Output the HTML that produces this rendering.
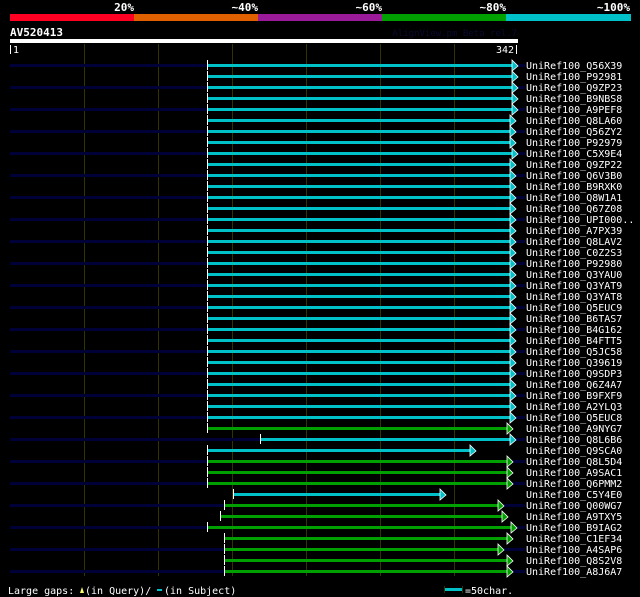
<!DOCTYPE html>
<html><head><meta charset="utf-8"><style>
html,body{margin:0;padding:0;background:#000;width:640px;height:597px;overflow:hidden}
svg{display:block}
text{font-family:"DejaVu Sans Mono","Liberation Mono",monospace;fill:#fff}
</style></head><body>
<svg id="s" width="640" height="597" xmlns="http://www.w3.org/2000/svg">
<rect x="10" y="14" width="124" height="7" fill="#ff0022"/>
<rect x="134" y="14" width="124" height="7" fill="#e06000"/>
<rect x="258" y="14" width="124" height="7" fill="#9a1a9a"/>
<rect x="382" y="14" width="124" height="7" fill="#00a000"/>
<rect x="506" y="14" width="125" height="7" fill="#00c0c8"/>
<text x="134" y="11" font-size="11" font-weight="bold" text-anchor="end">20%</text>
<text x="258" y="11" font-size="11" font-weight="bold" text-anchor="end">~40%</text>
<text x="382" y="11" font-size="11" font-weight="bold" text-anchor="end">~60%</text>
<text x="506" y="11" font-size="11" font-weight="bold" text-anchor="end">~80%</text>
<text x="630" y="11" font-size="11" font-weight="bold" text-anchor="end">~100%</text>
<text x="10" y="36" font-size="11" font-weight="bold">AV520413</text>
<text x="517" y="36" font-size="9" text-anchor="end" style="fill:#0a0a30">AlignView.pm Beta rel.7</text>
<rect x="10" y="39" width="508" height="4" fill="#fff"/>
<rect x="10" y="45" width="1" height="9" fill="#fff"/>
<text x="13" y="53" font-size="10">1</text>
<text x="514" y="53" font-size="10" text-anchor="end">342</text>
<rect x="516" y="45" width="1" height="9" fill="#fff"/>
<g id="grid"></g>
<g id="rows"></g>
<text x="8" y="594" font-size="10">Large gaps:</text>
<polygon points="80,593 82,587 84,593" fill="#ffff66"/>
<text x="85" y="594" font-size="10">(in Query)/</text>
<rect x="157" y="589" width="5" height="2" fill="#00c0c8"/>
<text x="164" y="594" font-size="10">(in Subject)</text>
<rect x="445" y="588" width="17" height="3" fill="#00c0c8"/>
<rect x="444" y="586" width="1" height="7" fill="#333300"/>
<rect x="462" y="586" width="1" height="7" fill="#333300"/>
<text x="465" y="594" font-size="10">=50char.</text>
</svg>
<script>
var NS="http://www.w3.org/2000/svg";
function el(p,t,a){var e=document.createElementNS(NS,t);for(var k in a)e.setAttribute(k,a[k]);p.appendChild(e);return e;}
var g=document.getElementById('grid');
[84,158,232,306,380,454].forEach(function(x){el(g,'rect',{x:x,y:44,width:1,height:532,fill:'#333300'});});
var C='#00c0c8',G='#00a000';
var rows=[
["Q56X39",207,512,C],["P92981",207,512,C],["Q9ZP23",207,512,C],["B9NBS8",207,512,C],["A9PEF8",207,512,C],
["Q8LA60",207,510,C],["Q56ZY2",207,510,C],["P92979",207,510,C],["C5X9E4",207,512,C],["Q9ZP22",207,510,C],
["Q6V3B0",207,510,C],["B9RXK0",207,510,C],["Q8W1A1",207,510,C],["Q67Z08",207,510,C],["UPI000..",207,510,C],
["A7PX39",207,510,C],["Q8LAV2",207,510,C],["C0Z2S3",207,510,C],["P92980",207,510,C],["Q3YAU0",207,510,C],
["Q3YAT9",207,510,C],["Q3YAT8",207,510,C],["Q5EUC9",207,510,C],["B6TAS7",207,510,C],["B4G162",207,510,C],
["B4FTT5",207,510,C],["Q5JC58",207,510,C],["Q39619",207,510,C],["Q9SDP3",207,510,C],["Q6Z4A7",207,510,C],
["B9FXF9",207,510,C],["A2YLQ3",207,510,C],["Q5EUC8",207,510,C],["A9NYG7",207,507,G],["Q8L6B6",260,510,C],
["Q9SCA0",207,470,C],["Q8L5D4",207,507,G],["A9SAC1",207,507,G],["Q6PMM2",207,507,G],["C5Y4E0",233,440,C],
["Q00WG7",224,498,G],["A9TXY5",220,502,G],["B9IAG2",207,511,G],["C1EF34",224,507,G],["A4SAP6",224,498,G],
["Q8S2V8",224,507,G],["A8J6A7",224,507,G]];
var r=document.getElementById('rows');
rows.forEach(function(d,i){
 var y=65+11*i;
 if(i%2==0){el(r,'rect',{x:10,y:y-1,width:d[1]-10,height:3,fill:'#000038'});el(r,'rect',{x:d[2]+6,y:y-1,width:519-d[2],height:3,fill:'#000038'});}
 el(r,'rect',{x:d[1],y:y-1,width:d[2]-d[1],height:3,fill:d[3]});
 el(r,'rect',{x:d[1],y:y-5,width:1,height:10,fill:'#fff'});
 el(r,'polygon',{points:(d[2])+','+(y-5)+' '+(d[2]+6)+','+(y+1)+' '+(d[2])+','+(y+6),fill:d[3],stroke:'#fff','stroke-width':'0.8'});
 var t=el(r,'text',{x:526,y:y+4,'font-size':'10'});t.textContent='UniRef100_'+d[0];
});
</script>
</body></html>
